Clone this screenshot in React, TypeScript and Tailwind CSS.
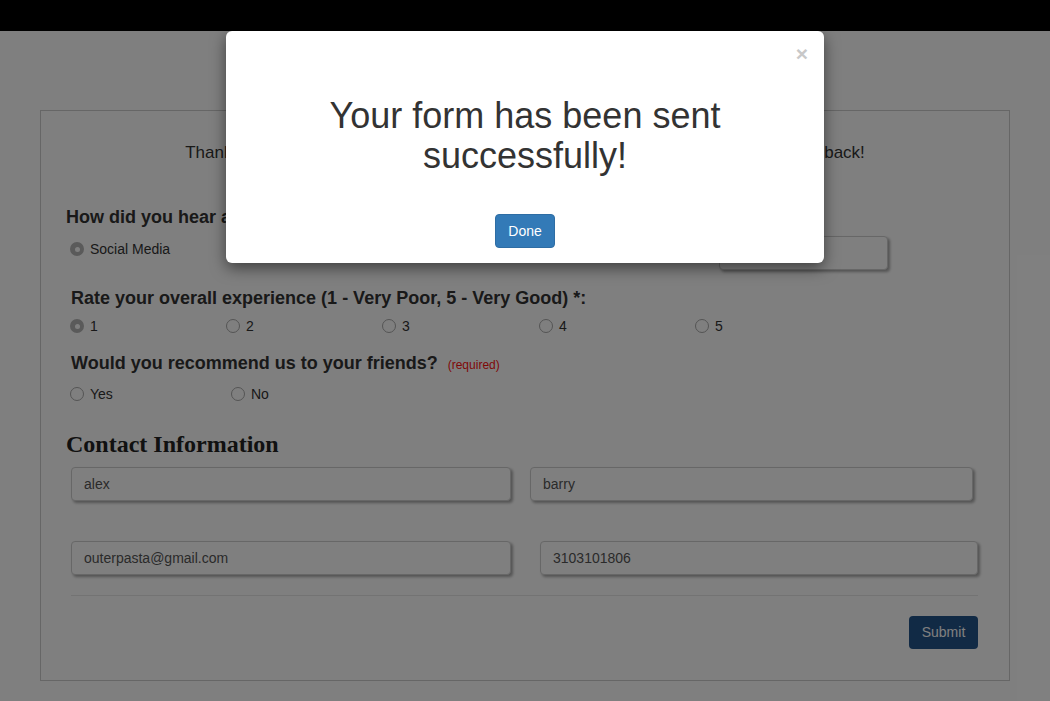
import React from "react";

const Radio = ({ checked = false }: { checked?: boolean }) =>
  checked ? (
    <span className="flex h-[14px] w-[14px] shrink-0 items-center justify-center rounded-full bg-[#b4b4b4]">
      <span className="h-[5px] w-[5px] rounded-full bg-white" />
    </span>
  ) : (
    <span className="h-[14px] w-[14px] shrink-0 rounded-full border border-[#a8a8a8] bg-white" />
  );

const Opt = ({ label, checked = false, w }: { label: string; checked?: boolean; w: string }) => (
  <div className={`flex items-center gap-[6px] ${w}`}>
    <Radio checked={checked} />
    <span className="text-[14px] leading-[20px] text-[#333]">{label}</span>
  </div>
);

const Field = ({ value, cls }: { value: string; cls: string }) => (
  <div
    className={`flex h-[34px] items-center rounded-[4px] border border-[#cfcfcf] bg-white pl-[12px] text-[14px] text-[#555] shadow-[2px_2px_3px_rgba(0,0,0,0.35)] ${cls}`}
  >
    {value}
  </div>
);

export default function App() {
  return (
    <div
      className="relative h-[701px] w-[1050px] overflow-hidden bg-white text-[#333]"
      style={{ fontFamily: '"Liberation Sans", Arial, Helvetica, sans-serif' }}
    >
      <div className="h-[31px] bg-black" />

      <div className="mx-[40px] mt-[79px] border border-[#cccccc] pb-[31px]">
        <div className="mt-[32px] h-[20px] text-center text-[17px] leading-[20px]">
          Thank you for taking the time to fill out our customer survey. We appreciate your feedback!
        </div>

        <div className="ml-[25px] mt-[44px] h-[20px] text-[18px] font-bold leading-[20px]">
          How did you hear about us? *:
        </div>

        <div className="ml-[29px] mt-[9px] flex h-[34px] items-start">
          <div className="mt-[1px] flex">
            <Opt label="Social Media" checked w="w-[156px]" />
            <Opt label="Friend" w="w-[156px]" />
            <Opt label="Advertisement" w="w-[157px]" />
            <Opt label="Search Engine" w="w-[156px]" />
            <div className="w-[24px]">
              <Radio />
            </div>
          </div>
          <Field value="" cls="w-[169px]" />
        </div>

        <div className="ml-[30px] mt-[18px] h-[20px] text-[18px] font-bold leading-[20px]">
          Rate your overall experience (1 - Very Poor, 5 - Very Good) *:
        </div>

        <div className="ml-[29px] mt-[8px] flex h-[20px]">
          <Opt label="1" checked w="w-[156px]" />
          <Opt label="2" w="w-[156px]" />
          <Opt label="3" w="w-[157px]" />
          <Opt label="4" w="w-[156px]" />
          <Opt label="5" w="w-[156px]" />
        </div>

        <div className="ml-[30px] mt-[17px] flex h-[20px] items-baseline gap-[10px]">
          <span className="text-[18px] font-bold leading-[20px]">Would you recommend us to your friends?</span>
          <span className="text-[12px] text-[#ff1010]">(required)</span>
        </div>

        <div className="ml-[29px] mt-[11px] flex h-[20px]">
          <Opt label="Yes" w="w-[161px]" />
          <Opt label="No" w="w-[156px]" />
        </div>

        <div
          className="ml-[25px] mt-[26px] h-[28px] text-[24px] font-bold leading-[28px] text-[#222]"
          style={{ fontFamily: '"Liberation Serif", "Times New Roman", serif' }}
        >
          Contact Information
        </div>

        <div className="ml-[30px] mt-[9px] flex">
          <Field value="alex" cls="w-[440px]" />
          <Field value="barry" cls="ml-[19px] w-[443px]" />
        </div>

        <div className="ml-[30px] mt-[40px] flex">
          <Field value="outerpasta@gmail.com" cls="w-[440px]" />
          <Field value="3103101806" cls="ml-[29px] w-[438px]" />
        </div>

        <div className="ml-[30px] mt-[20px] h-px w-[907px] bg-[#e6e6e6]" />

        <div className="ml-[30px] mt-[20px] flex w-[907px] justify-end">
          <button className="h-[33px] w-[69px] rounded-[4px] bg-[#22548a] text-[14px] text-white">Submit</button>
        </div>
      </div>

      <div className="absolute inset-0 bg-black/50" />

      <div className="absolute inset-x-0 top-[31px] flex justify-center">
        <div className="relative w-[598px] rounded-[6px] bg-white pb-[15px] pt-[65px] text-center shadow-[0_5px_15px_rgba(0,0,0,0.5)]">
          <button className="absolute right-[16px] top-[12px] text-[21px] font-bold leading-[21px] text-[#c8c8c8]">
            ×
          </button>
          <h1 className="mx-auto w-[420px] text-[36px] font-normal leading-[40px] text-[#333]">
            Your form has been sent successfully!
          </h1>
          <div className="mt-[38px] flex justify-center">
            <button className="h-[34px] w-[60px] rounded-[4px] border border-[#2e6da4] bg-[#337ab7] text-[14px] text-white">
              Done
            </button>
          </div>
        </div>
      </div>
    </div>
  );
}
